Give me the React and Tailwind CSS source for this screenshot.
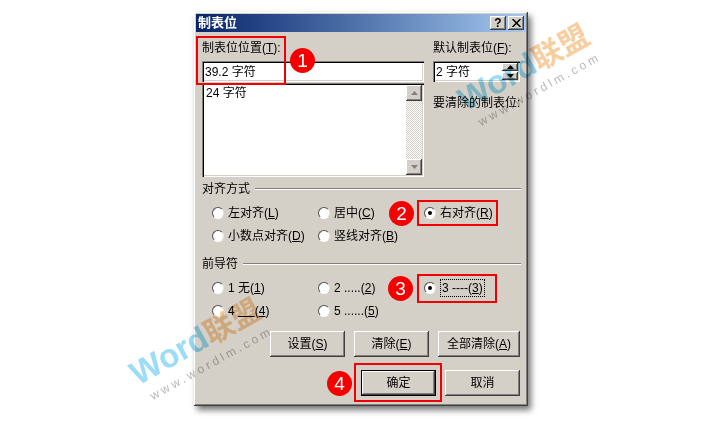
const FONT = "font-['Liberation_Sans','Noto_Sans_CJK_SC',sans-serif]";
const RAISED = "shadow-[inset_-1px_-1px_0_#404040,inset_1px_1px_0_#ffffff,inset_-2px_-2px_0_#808080]";
const SUNKEN = "shadow-[inset_1px_1px_0_#808080,inset_2px_2px_0_#000000,inset_-1px_-1px_0_#ffffff,inset_-2px_-2px_0_#d4d0c8]";

const Mnemonic = ({ before, letter, colon }) => (
  <span>
    {before}(<span className="underline">{letter}</span>){colon ? ":" : ""}
  </span>
);

const Radio = ({ checked, children }) => (
  <div className="flex h-4 items-center gap-1">
    <span className="flex h-3 w-3 shrink-0 items-center justify-center rounded-full border border-t-[#505050] border-l-[#505050] border-r-[#e8e6e0] border-b-[#ffffff] bg-white">
      {checked && <span className="h-1 w-1 rounded-full bg-black" />}
    </span>
    {children}
  </div>
);

const GroupLabel = ({ children, className }) => (
  <div className={`flex h-4 items-center gap-[5px] ${className}`}>
    <span>{children}</span>
    <span className="h-[2px] flex-1 border-t border-b border-t-[#808080] border-b-white" />
  </div>
);

const Button = ({ width, children, isDefault }) => (
  <button className={`flex h-[26px] items-center justify-center bg-[#d4d0c8] ${width} ${isDefault ? "border border-black " : ""}${RAISED}`}>
    {children}
  </button>
);

const Triangle = ({ down, color = "#000000", size = 4 }) => (
  <svg width={size * 2 + 1} height={size + 1} viewBox="0 0 9 5">
    <path d={down ? "M0 0H9L4.5 5Z" : "M0 5H9L4.5 0Z"} fill={color} />
  </svg>
);

const ScrollButton = ({ down }) => (
  <div className={`flex h-4 w-4 items-center justify-center bg-[#d4d0c8] ${RAISED}`}>
    <Triangle down={down} color="#808080" size={3} />
  </div>
);

const RedBox = ({ className }) => (
  <div className={`pointer-events-none absolute border-[2px] border-[#f00000] ${className}`} />
);

const Badge = ({ className, children }) => (
  <div className={`absolute flex h-[25px] w-[25px] items-center justify-center rounded-full bg-[#f40000] text-[19px] text-white ${className}`}>
    {children}
  </div>
);

const Watermark = ({ className }) => (
  <div className={`pointer-events-none absolute h-[62px] w-[160px] origin-bottom-left -rotate-[29deg] mix-blend-multiply ${className}`}>
    <div className="flex items-baseline">
      <span className="font-['Liberation_Sans',sans-serif] text-[33px] font-bold leading-[40px] text-[#58c4f2]/60">Word</span>
      <span className="font-['Noto_Sans_CJK_SC',sans-serif] text-[30px] font-bold leading-[40px] text-[#f5b26b]/65">联盟</span>
    </div>
    <div className="pl-[6px] font-['Liberation_Sans',sans-serif] text-[12px] leading-[14px] tracking-[3.2px] text-[#808080]/55">www.wordlm.com</div>
  </div>
);

export default function App() {
  return (
    <div className={`relative h-[426px] w-[710px] overflow-hidden bg-white pl-[194px] pt-[12px] text-[12px] leading-4 text-black ${FONT}`}>
      <div className={`h-[394px] w-[334px] bg-[#d4d0c8] p-[2px] ${RAISED} drop-shadow-[3px_4px_3px_rgba(0,0,0,0.55)]`}>
        <div className="flex h-[18px] items-center justify-between bg-gradient-to-r from-[#0a246a] to-[#a6caf0] pl-[2px] pr-[2px]">
          <span className="text-[13px] font-bold text-white">制表位</span>
          <div className="flex gap-[2px]">
            <div className={`flex h-[14px] w-4 items-center justify-center bg-[#d4d0c8] text-[12px] font-bold ${RAISED}`}>?</div>
            <div className={`flex h-[14px] w-4 items-center justify-center bg-[#d4d0c8] ${RAISED}`}>
              <svg width="9" height="8" viewBox="0 0 9 8">
                <path d="M0.5 0L8.5 8M8.5 0L0.5 8" stroke="#000000" strokeWidth="1.5" />
              </svg>
            </div>
          </div>
        </div>

        <div className="px-[6px] pt-[8px]">
          <div className="flex gap-[9px]">
            <div className="w-[222px]">
              <div className="mb-[5px] h-4"><Mnemonic before="制表位位置" letter="T" colon /></div>
              <div className={`flex h-[21px] items-center bg-white pl-[3px] ${SUNKEN}`}>39.2 字符</div>
              <div className={`mt-[1px] flex h-[94px] justify-between bg-white py-[2px] pl-[4px] pr-[2px] ${SUNKEN}`}>
                <span>24 字符</span>
                <div className="flex w-4 flex-col justify-between bg-[repeating-conic-gradient(#d4d0c8_0_25%,#ffffff_0_50%)] bg-[length:2px_2px]">
                  <ScrollButton />
                  <ScrollButton down />
                </div>
              </div>
            </div>
            <div className="w-[87px]">
              <div className="mb-[5px] h-4 whitespace-nowrap"><Mnemonic before="默认制表位" letter="F" colon /></div>
              <div className={`flex h-[21px] items-center justify-between bg-white pl-[3px] pr-[2px] ${SUNKEN}`}>
                <span>2 字符</span>
                <div className="flex w-4 flex-col gap-px">
                  <div className={`flex h-2 items-center justify-center bg-[#d4d0c8] ${RAISED}`}><Triangle size={3} /></div>
                  <div className={`flex h-2 items-center justify-center bg-[#d4d0c8] ${RAISED}`}><Triangle down size={3} /></div>
                </div>
              </div>
              <div className="mt-[13px] whitespace-nowrap">要清除的制表位:</div>
            </div>
          </div>

          <GroupLabel className="mt-[4px] -mr-px">对齐方式</GroupLabel>
          <div className="mt-[8px] grid grid-cols-[106px_106px_auto] gap-y-[7px] pl-[10px]">
            <Radio><Mnemonic before="左对齐" letter="L" /></Radio>
            <Radio><Mnemonic before="居中" letter="C" /></Radio>
            <Radio checked><Mnemonic before="右对齐" letter="R" /></Radio>
            <Radio><Mnemonic before="小数点对齐" letter="D" /></Radio>
            <Radio><Mnemonic before="竖线对齐" letter="B" /></Radio>
          </div>

          <GroupLabel className="mt-[12px] -mr-px">前导符</GroupLabel>
          <div className="mt-[8px] grid grid-cols-[106px_106px_auto] gap-y-[7px] pl-[10px]">
            <Radio><Mnemonic before="1 无" letter="1" /></Radio>
            <Radio><Mnemonic before="2 ....." letter="2" /></Radio>
            <Radio checked>
              <span className="-my-px border border-dotted border-black px-px"><Mnemonic before="3 ----" letter="3" /></span>
            </Radio>
            <Radio><span>4 <span className="underline">&nbsp;&nbsp;&nbsp;&nbsp;&nbsp;</span>(<span className="underline">4</span>)</span></Radio>
            <Radio><Mnemonic before="5 ......" letter="5" /></Radio>
          </div>

          <div className="mt-[12px] flex justify-end gap-[9px]">
            <Button width="w-[75px]"><Mnemonic before="设置" letter="S" /></Button>
            <Button width="w-[75px]"><Mnemonic before="清除" letter="E" /></Button>
            <Button width="w-[82px]"><Mnemonic before="全部清除" letter="A" /></Button>
          </div>
          <div className="mt-[13px] flex justify-end gap-[9px]">
            <Button width="w-[75px]" isDefault>确定</Button>
            <Button width="w-[75px]">取消</Button>
          </div>
        </div>
      </div>

      <RedBox className="left-[196px] top-[36px] h-[49px] w-[90px]" />
      <RedBox className="left-[417px] top-[200px] h-[26px] w-[81px]" />
      <RedBox className="left-[417px] top-[274px] h-[29px] w-[80px]" />
      <RedBox className="left-[354px] top-[363px] h-[39px] w-[88px]" />

      <Badge className="left-[290px] top-[48px]">1</Badge>
      <Badge className="left-[389px] top-[201px]">2</Badge>
      <Badge className="left-[388px] top-[276px]">3</Badge>
      <Badge className="left-[327px] top-[371px]">4</Badge>

      <Watermark className="left-[480px] top-[75px]" />
      <Watermark className="left-[152px] top-[349px]" />
    </div>
  );
}
